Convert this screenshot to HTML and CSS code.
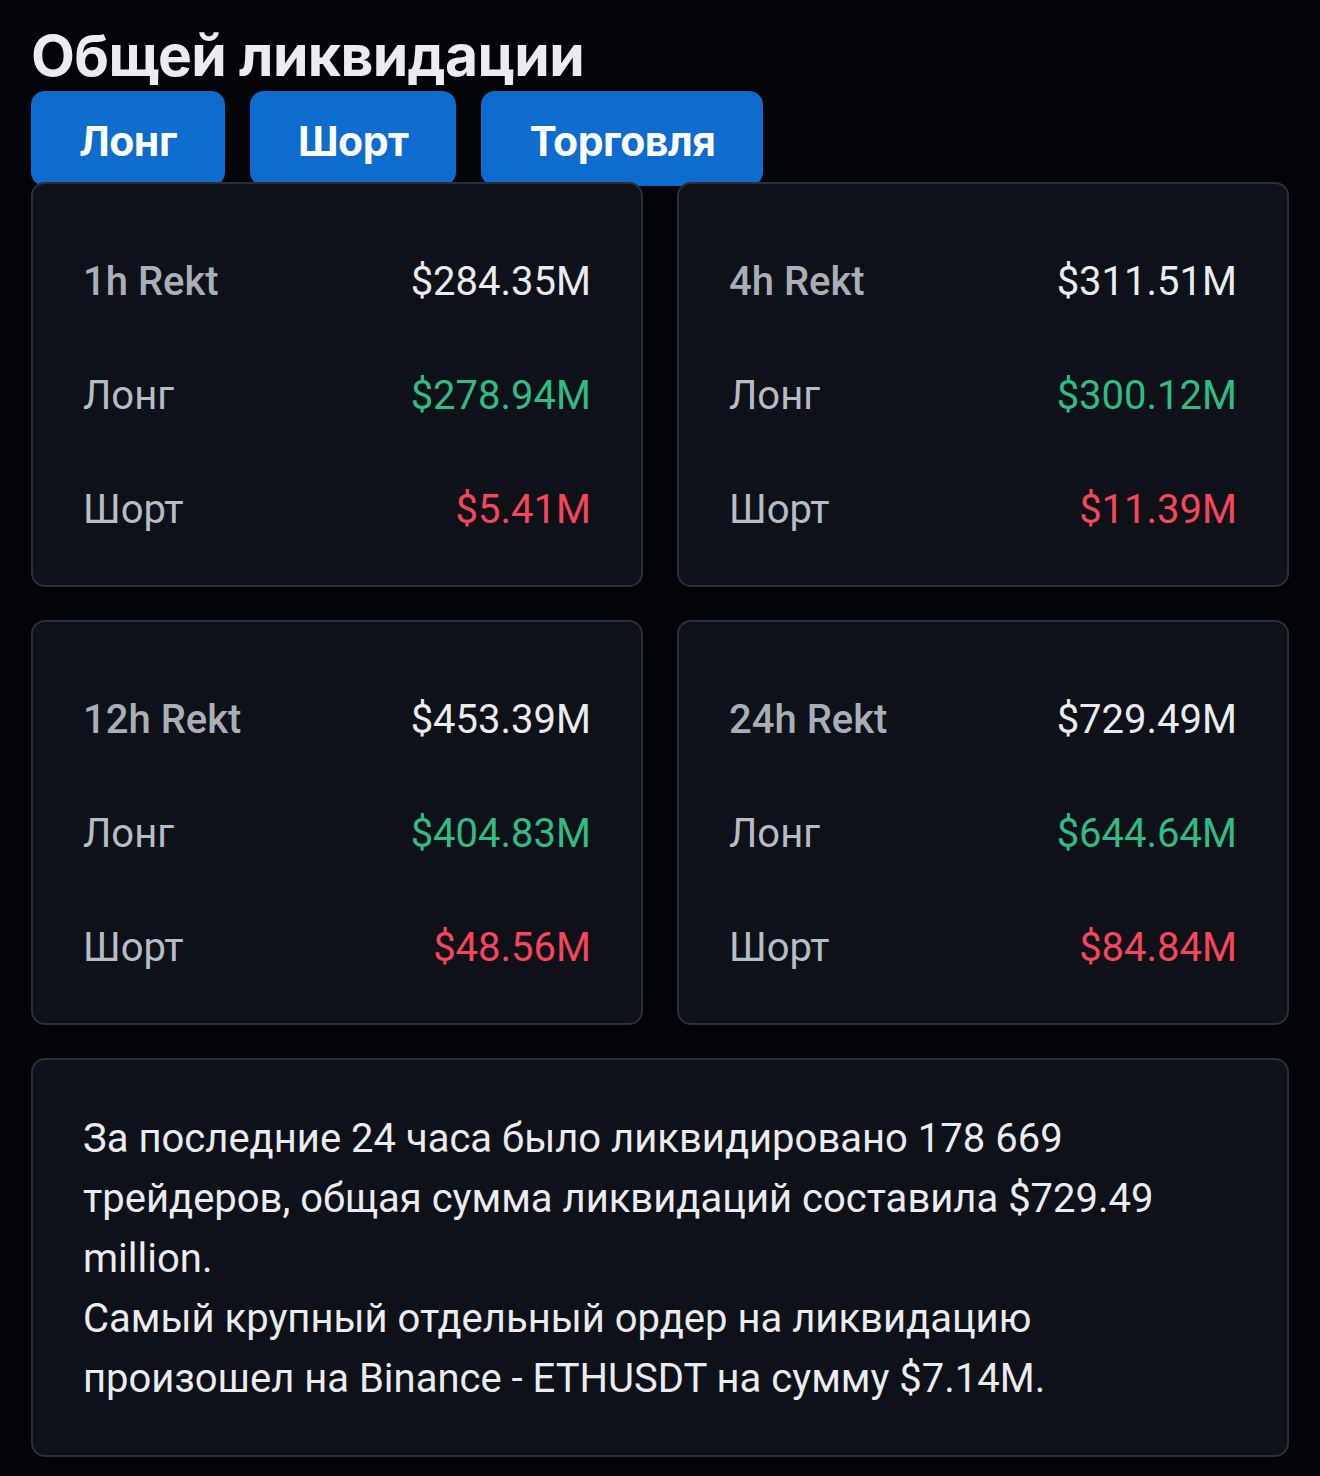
FILE: index.html
```html
<!DOCTYPE html>
<html lang="ru">
<head>
    <meta charset="UTF-8">
    <meta name="viewport" content="width=device-width, initial-scale=1.0">
    <title>Общей ликвидации</title>
    <link rel="stylesheet" href="styles.css">
</head>
<body>
    <div class="page">
        <h1 class="title">Общей ликвидации</h1>
        <div class="tabs">
            <button class="tab">Лонг</button>
            <button class="tab">Шорт</button>
            <button class="tab">Торговля</button>
        </div>

        <div class="grid">
            <div class="card">
                <div class="row"><span class="period">1h Rekt</span><span class="value">$284.35M</span></div>
                <div class="row"><span class="label">Лонг</span><span class="value green">$278.94M</span></div>
                <div class="row"><span class="label">Шорт</span><span class="value red">$5.41M</span></div>
            </div>
            <div class="card">
                <div class="row"><span class="period">4h Rekt</span><span class="value">$311.51M</span></div>
                <div class="row"><span class="label">Лонг</span><span class="value green">$300.12M</span></div>
                <div class="row"><span class="label">Шорт</span><span class="value red">$11.39M</span></div>
            </div>
            <div class="card">
                <div class="row"><span class="period">12h Rekt</span><span class="value">$453.39M</span></div>
                <div class="row"><span class="label">Лонг</span><span class="value green">$404.83M</span></div>
                <div class="row"><span class="label">Шорт</span><span class="value red">$48.56M</span></div>
            </div>
            <div class="card">
                <div class="row"><span class="period">24h Rekt</span><span class="value">$729.49M</span></div>
                <div class="row"><span class="label">Лонг</span><span class="value green">$644.64M</span></div>
                <div class="row"><span class="label">Шорт</span><span class="value red">$84.84M</span></div>
            </div>
        </div>

        <div class="summary">
            <p>За последние 24 часа было ликвидировано 178 669 трейдеров, общая сумма ликвидаций составила $729.49 million.</p>
            <p>Самый крупный отдельный ордер на ликвидацию произошел на Binance - ETHUSDT на сумму $7.14M.</p>
        </div>
    </div>
</body>
</html>
```

FILE: styles.css
```css
body {
    margin: 0;
    background-color: #030408;
    font-family: Roboto, "Noto Sans", sans-serif;
    color: #eaecef;
}
.page {
    padding: 22px 31px 19px 31px;
}
.title {
    margin: 0;
    font-family: Inter, Roboto, sans-serif;
    font-size: 57px;
    font-weight: 700;
    letter-spacing: -0.6px;
    line-height: 68px;
    color: #eaecef;
}
.tabs {
    display: flex;
    gap: 25px;
    margin-top: 1px;
}
.tab {
    height: 95px;
    padding: 4px 48px 0 48px;
    border: none;
    border-radius: 14px;
    background-color: #0d6ccd;
    color: #ffffff;
    font-family: Inter, Roboto, sans-serif;
    font-size: 41px;
    font-weight: 700;
    letter-spacing: -0.5px;
}
.grid {
    position: relative;
    display: grid;
    grid-template-columns: 1fr 1fr;
    column-gap: 34px;
    row-gap: 33px;
    margin-top: -4px;
}
.card {
    background-color: #0e1118;
    border: 2px solid #2b2f36;
    border-radius: 14px;
    padding: 40px 50px 19px 50px;
}
.row {
    display: flex;
    justify-content: space-between;
    align-items: center;
    height: 114px;
    font-size: 40px;
}
.period {
    font-weight: 500;
    color: #a9aeb7;
}
.label {
    font-weight: 400;
    color: #b7bdc6;
}
.value {
    font-weight: 400;
    color: #eaecef;
}
.green {
    color: #2ebd85;
}
.red {
    color: #f6465d;
}
.summary {
    margin-top: 33px;
    background-color: #0e1118;
    border: 2px solid #2b2f36;
    border-radius: 14px;
    padding: 49px 50px 46px 50px;
    font-size: 40px;
    line-height: 60px;
    color: #eaecef;
}
.summary p {
    margin: 0;
}
```
